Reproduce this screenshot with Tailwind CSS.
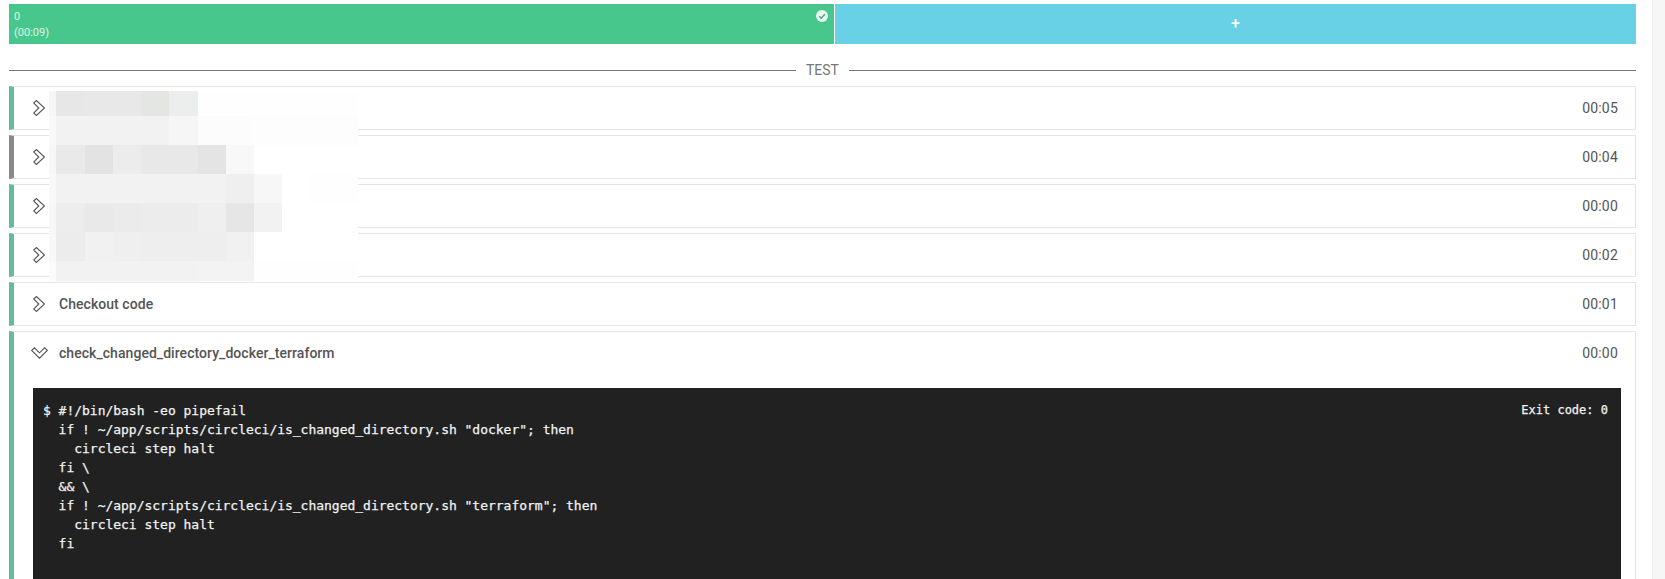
<!DOCTYPE html>
<html lang="en">
<head>
    <meta charset="UTF-8">
    <meta name="viewport" content="width=device-width, initial-scale=1.0">
    <title>Job steps</title>
    <script src="https://cdn.jsdelivr.net/npm/@tailwindcss/browser@4"></script>
</head>
<body class="bg-white h-[579px] overflow-hidden font-['Roboto',sans-serif]">
    <div class="relative flex h-[579px] overflow-hidden">
        <main class="w-[1652px] pl-[9px] pr-[16px] pt-[4px]">
            <!-- Progress bar -->
            <div class="flex h-[40px]">
                <div class="relative w-[825px] bg-[#47c78b] pl-[5px] pt-[5px] text-[11px] leading-[16px] text-white/80">
                    <div>0</div>
                    <div>(00:09)</div>
                    <svg class="absolute right-[6px] top-[6px] w-[12px] h-[12px]" viewBox="0 0 12 12">
                        <circle cx="6" cy="6" r="6" fill="#e8f8f0"/>
                        <path d="M3.2 6.2 L5.2 8.2 L8.9 4.2" fill="none" stroke="#47a57a" stroke-width="1.4"/>
                    </svg>
                </div>
                <div class="w-px bg-white"></div>
                <div class="flex-1 flex items-center justify-center bg-[#69d1e6] text-white text-[16px] leading-none font-medium">+</div>
            </div>

            <!-- Divider -->
            <div class="flex items-center h-[18px] mt-[17px] mb-[7px]">
                <div class="flex-1 h-px bg-[#777777]"></div>
                <span class="w-[53px] text-center text-[14px] leading-[18px] text-[#777777]">TEST</span>
                <div class="flex-1 h-px bg-[#777777]"></div>
            </div>

            <!-- Steps -->
            <div class="flex items-center h-[44px] mb-[5px] border border-[#e5e5e5] border-l-[5px] border-l-[#66b99a] pl-[19px] pr-[17px] text-[14px] text-[#555555]">
                <svg class="w-[12px] h-[16px] mr-[14px]" viewBox="0 0 12 16"><path d="M.7 3 L3.4 .5 L11.5 8 L3.4 15.5 L.7 13 L5.8 8 Z" fill="none" stroke="#555555" stroke-width="1.1"/></svg>
                <span class="flex-1"></span>
                <span class="tracking-[0.2px]">00:05</span>
            </div>
            <div class="flex items-center h-[44px] mb-[5px] border border-[#e5e5e5] border-l-[5px] border-l-[#8a8888] pl-[19px] pr-[17px] text-[14px] text-[#555555]">
                <svg class="w-[12px] h-[16px] mr-[14px]" viewBox="0 0 12 16"><path d="M.7 3 L3.4 .5 L11.5 8 L3.4 15.5 L.7 13 L5.8 8 Z" fill="none" stroke="#555555" stroke-width="1.1"/></svg>
                <span class="flex-1"></span>
                <span class="tracking-[0.2px]">00:04</span>
            </div>
            <div class="flex items-center h-[44px] mb-[5px] border border-[#e5e5e5] border-l-[5px] border-l-[#66b99a] pl-[19px] pr-[17px] text-[14px] text-[#555555]">
                <svg class="w-[12px] h-[16px] mr-[14px]" viewBox="0 0 12 16"><path d="M.7 3 L3.4 .5 L11.5 8 L3.4 15.5 L.7 13 L5.8 8 Z" fill="none" stroke="#555555" stroke-width="1.1"/></svg>
                <span class="flex-1"></span>
                <span class="tracking-[0.2px]">00:00</span>
            </div>
            <div class="flex items-center h-[44px] mb-[5px] border border-[#e5e5e5] border-l-[5px] border-l-[#66b99a] pl-[19px] pr-[17px] text-[14px] text-[#555555]">
                <svg class="w-[12px] h-[16px] mr-[14px]" viewBox="0 0 12 16"><path d="M.7 3 L3.4 .5 L11.5 8 L3.4 15.5 L.7 13 L5.8 8 Z" fill="none" stroke="#555555" stroke-width="1.1"/></svg>
                <span class="flex-1"></span>
                <span class="tracking-[0.2px]">00:02</span>
            </div>
            <div class="flex items-center h-[44px] mb-[5px] border border-[#e5e5e5] border-l-[5px] border-l-[#66b99a] pl-[19px] pr-[17px] text-[14px] text-[#555555]">
                <svg class="w-[12px] h-[16px] mr-[14px]" viewBox="0 0 12 16"><path d="M.7 3 L3.4 .5 L11.5 8 L3.4 15.5 L.7 13 L5.8 8 Z" fill="none" stroke="#555555" stroke-width="1.1"/></svg>
                <span class="flex-1 font-medium tracking-[0.05px]">Checkout code</span>
                <span class="tracking-[0.2px]">00:01</span>
            </div>

            <!-- Expanded step -->
            <div class="h-[300px] border border-[#e5e5e5] border-l-[5px] border-l-[#66b99a] text-[14px] text-[#555555]">
                <div class="flex items-center h-[42px] pl-[17px] pr-[17px]">
                    <svg class="w-[17px] h-[12px] mr-[11px]" viewBox="0 0 17 12"><path d="M.7 3.4 L3.4 .8 L8.5 5.8 L13.6 .8 L16.3 3.4 L8.5 11.2 Z" fill="none" stroke="#555555" stroke-width="1.1"/></svg>
                    <span class="flex-1 font-medium tracking-[0.05px]">check_changed_directory_docker_terraform</span>
                    <span class="tracking-[0.2px]">00:00</span>
                </div>
                <div class="flex justify-between items-start ml-[19px] mr-[14px] mt-[14px] h-[240px] bg-[#212121] pl-[10px] pr-[13px] pt-[13px] font-['DejaVu_Sans_Mono',monospace] text-[#f2f2f2] [-webkit-text-stroke:0.25px_#f2f2f2]">
                    <pre class="text-[13px] leading-[19px] tracking-[-0.02px] font-['DejaVu_Sans_Mono',monospace]">$ #!/bin/bash -eo pipefail
  if ! ~/app/scripts/circleci/is_changed_directory.sh "docker"; then
    circleci step halt
  fi \
  &amp;&amp; \
  if ! ~/app/scripts/circleci/is_changed_directory.sh "terraform"; then
    circleci step halt
  fi</pre>
                    <span class="text-[12px] leading-[19px]">Exit code: 0</span>
                </div>
            </div>
        </main>
        <aside class="flex-1 bg-[#f6f6f6] border-l border-[#f0f0f0]"></aside>

        <!-- Redacted step names -->
        <div class="absolute left-[49px] top-[91px] grid grid-cols-[7px_29px_28px_28px_28px_29px_28px_28px_28px_28px_48px] grid-rows-[25px_29px_29px_29px_29px_29px_20px]">
            <div class="bg-[#f6f6f6]"></div><div class="bg-[#e6e7e6]"></div><div class="bg-[#e7e8e7]"></div><div class="bg-[#e8e8e8]"></div><div class="bg-[#e4e6e4]"></div><div class="bg-[#eceded]"></div><div class="bg-[#fefefe]"></div><div class="bg-[#fefefe]"></div><div class="bg-[#fefefe]"></div><div class="bg-[#fefefe]"></div><div class="bg-[#fefefe]"></div>
            <div class="bg-[#f9f9f9]"></div><div class="bg-[#f2f2f2]"></div><div class="bg-[#f2f2f2]"></div><div class="bg-[#f2f2f2]"></div><div class="bg-[#f2f2f2]"></div><div class="bg-[#f6f6f6]"></div><div class="bg-[#fcfcfc]"></div><div class="bg-[#fcfcfc]"></div><div class="bg-[#fdfdfd]"></div><div class="bg-[#fdfdfd]"></div><div class="bg-[#fdfdfd]"></div>
            <div class="bg-[#f7f7f7]"></div><div class="bg-[#e9e9e9]"></div><div class="bg-[#e3e3e3]"></div><div class="bg-[#ececec]"></div><div class="bg-[#e8e8e8]"></div><div class="bg-[#e8e8e8]"></div><div class="bg-[#e4e4e4]"></div><div class="bg-[#f8f8f8]"></div><div class="bg-white"></div><div class="bg-white"></div><div class="bg-white"></div>
            <div class="bg-[#f9f9f9]"></div><div class="bg-[#f2f2f2]"></div><div class="bg-[#f2f2f2]"></div><div class="bg-[#f2f2f2]"></div><div class="bg-[#f2f2f2]"></div><div class="bg-[#f2f2f2]"></div><div class="bg-[#f2f2f2]"></div><div class="bg-[#efefef]"></div><div class="bg-[#f7f7f7]"></div><div class="bg-white"></div><div class="bg-[#fefefe]"></div>
            <div class="bg-[#f7f7f7]"></div><div class="bg-[#ededed]"></div><div class="bg-[#e9e9e9]"></div><div class="bg-[#ebebeb]"></div><div class="bg-[#ececec]"></div><div class="bg-[#ececec]"></div><div class="bg-[#efefef]"></div><div class="bg-[#e6e6e6]"></div><div class="bg-[#f2f2f2]"></div><div class="bg-white"></div><div class="bg-white"></div>
            <div class="bg-[#f8f8f8]"></div><div class="bg-[#ececec]"></div><div class="bg-[#f1f1f1]"></div><div class="bg-[#efefef]"></div><div class="bg-[#eeeeee]"></div><div class="bg-[#eeeeee]"></div><div class="bg-[#eeeeee]"></div><div class="bg-[#f1f1f1]"></div><div class="bg-white"></div><div class="bg-white"></div><div class="bg-white"></div>
            <div class="bg-[#fbfbfb]"></div><div class="bg-[#f2f2f2]"></div><div class="bg-[#f2f2f2]"></div><div class="bg-[#f2f2f2]"></div><div class="bg-[#f2f2f2]"></div><div class="bg-[#f2f2f2]"></div><div class="bg-[#f3f3f3]"></div><div class="bg-[#f3f3f3]"></div><div class="bg-[#fefefe]"></div><div class="bg-[#fefefe]"></div><div class="bg-[#fefefe]"></div>
        </div>
    </div>
</body>
</html>
